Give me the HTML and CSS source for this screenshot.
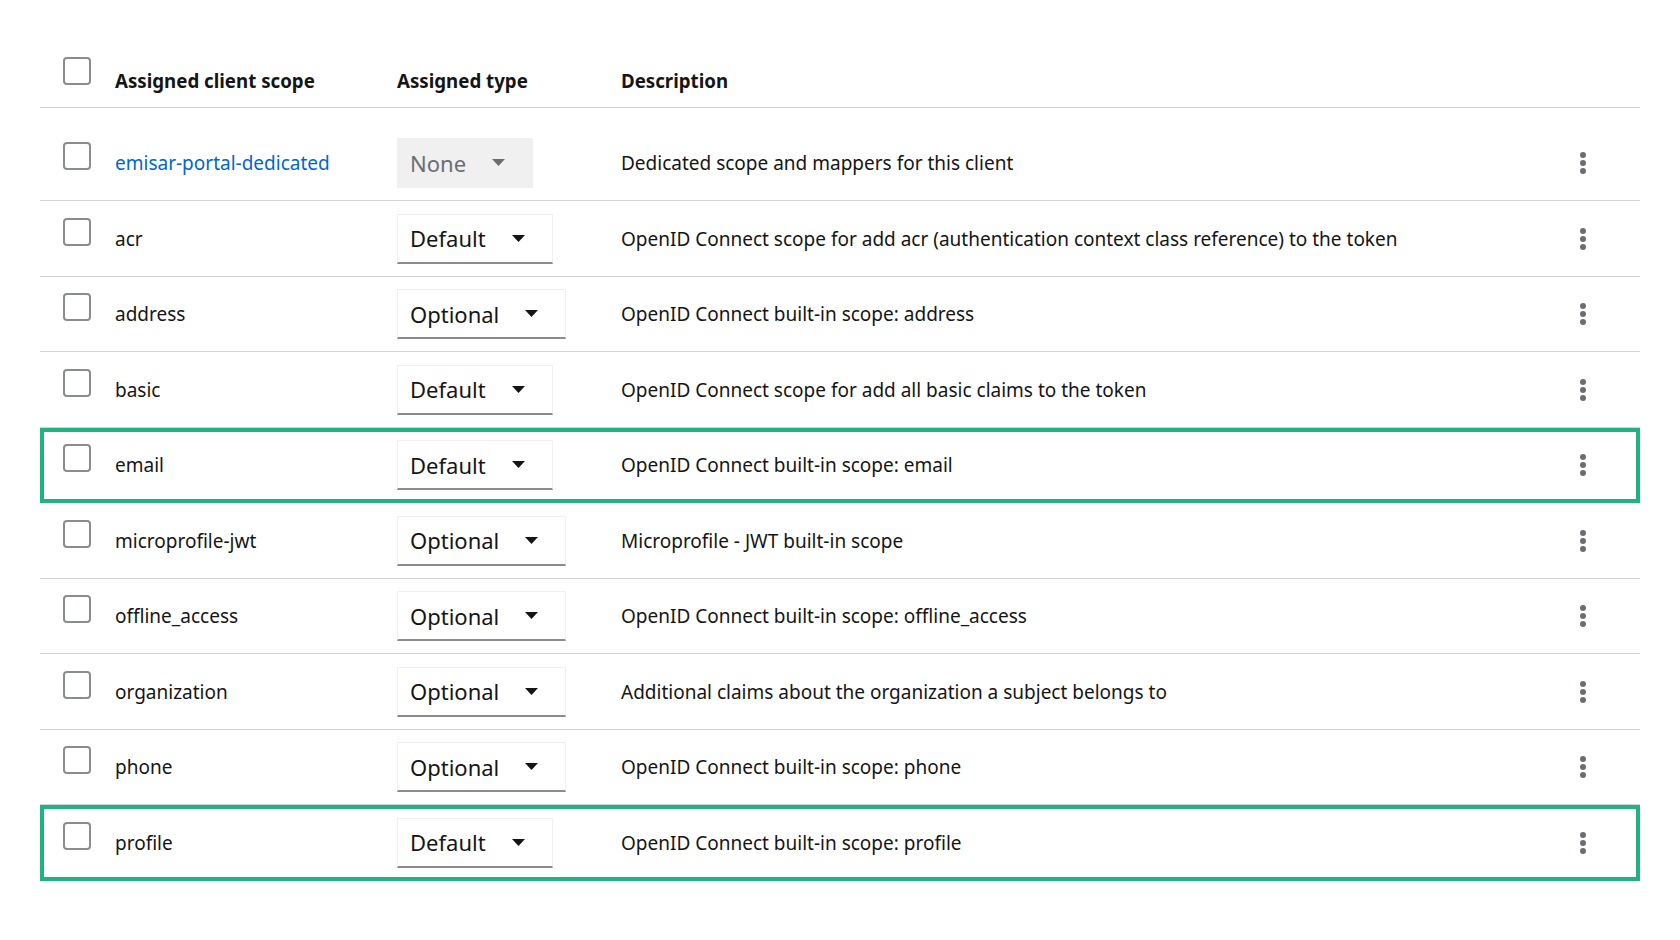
FILE: index.html
```html
<!DOCTYPE html>
<html lang="en">
<head>
    <meta charset="UTF-8">
    <meta name="viewport" content="width=device-width, initial-scale=1.0">
    <title>Client scopes</title>
    <link rel="stylesheet" href="styles.css">
</head>
<body>

    <div class="scopes">
        <div class="row head">
            <div class="cell check"><span class="checkbox"></span></div>
            <div class="cell">Assigned client scope</div>
            <div class="cell">Assigned type</div>
            <div class="cell">Description</div>
            <div class="cell"></div>
        </div>

        <div class="row first">
            <div class="cell check"><span class="checkbox"></span></div>
            <div class="cell"><a class="link" href="#">emisar-portal-dedicated</a></div>
            <div class="cell"><span class="select disabled">None <svg class="caret" viewBox="0 0 13 7"><path d="M0 0h13L6.5 7z"/></svg></span></div>
            <div class="cell desc">Dedicated scope and mappers for this client</div>
            <div class="cell kebab"><svg viewBox="0 0 6 22"><circle cx="3" cy="3" r="3"/><circle cx="3" cy="11" r="3"/><circle cx="3" cy="19" r="3"/></svg></div>
        </div>

        <div class="row">
            <div class="cell check"><span class="checkbox"></span></div>
            <div class="cell">acr</div>
            <div class="cell"><span class="select">Default <svg class="caret" viewBox="0 0 13 7"><path d="M0 0h13L6.5 7z"/></svg></span></div>
            <div class="cell desc">OpenID Connect scope for add acr (authentication context class reference) to the token</div>
            <div class="cell kebab"><svg viewBox="0 0 6 22"><circle cx="3" cy="3" r="3"/><circle cx="3" cy="11" r="3"/><circle cx="3" cy="19" r="3"/></svg></div>
        </div>

        <div class="row">
            <div class="cell check"><span class="checkbox"></span></div>
            <div class="cell">address</div>
            <div class="cell"><span class="select">Optional <svg class="caret" viewBox="0 0 13 7"><path d="M0 0h13L6.5 7z"/></svg></span></div>
            <div class="cell desc">OpenID Connect built-in scope: address</div>
            <div class="cell kebab"><svg viewBox="0 0 6 22"><circle cx="3" cy="3" r="3"/><circle cx="3" cy="11" r="3"/><circle cx="3" cy="19" r="3"/></svg></div>
        </div>

        <div class="row">
            <div class="cell check"><span class="checkbox"></span></div>
            <div class="cell">basic</div>
            <div class="cell"><span class="select">Default <svg class="caret" viewBox="0 0 13 7"><path d="M0 0h13L6.5 7z"/></svg></span></div>
            <div class="cell desc">OpenID Connect scope for add all basic claims to the token</div>
            <div class="cell kebab"><svg viewBox="0 0 6 22"><circle cx="3" cy="3" r="3"/><circle cx="3" cy="11" r="3"/><circle cx="3" cy="19" r="3"/></svg></div>
        </div>

        <div class="row marked">
            <div class="cell check"><span class="checkbox"></span></div>
            <div class="cell">email</div>
            <div class="cell"><span class="select">Default <svg class="caret" viewBox="0 0 13 7"><path d="M0 0h13L6.5 7z"/></svg></span></div>
            <div class="cell desc">OpenID Connect built-in scope: email</div>
            <div class="cell kebab"><svg viewBox="0 0 6 22"><circle cx="3" cy="3" r="3"/><circle cx="3" cy="11" r="3"/><circle cx="3" cy="19" r="3"/></svg></div>
        </div>

        <div class="row">
            <div class="cell check"><span class="checkbox"></span></div>
            <div class="cell">microprofile-jwt</div>
            <div class="cell"><span class="select">Optional <svg class="caret" viewBox="0 0 13 7"><path d="M0 0h13L6.5 7z"/></svg></span></div>
            <div class="cell desc">Microprofile - JWT built-in scope</div>
            <div class="cell kebab"><svg viewBox="0 0 6 22"><circle cx="3" cy="3" r="3"/><circle cx="3" cy="11" r="3"/><circle cx="3" cy="19" r="3"/></svg></div>
        </div>

        <div class="row">
            <div class="cell check"><span class="checkbox"></span></div>
            <div class="cell">offline_access</div>
            <div class="cell"><span class="select">Optional <svg class="caret" viewBox="0 0 13 7"><path d="M0 0h13L6.5 7z"/></svg></span></div>
            <div class="cell desc">OpenID Connect built-in scope: offline_access</div>
            <div class="cell kebab"><svg viewBox="0 0 6 22"><circle cx="3" cy="3" r="3"/><circle cx="3" cy="11" r="3"/><circle cx="3" cy="19" r="3"/></svg></div>
        </div>

        <div class="row">
            <div class="cell check"><span class="checkbox"></span></div>
            <div class="cell">organization</div>
            <div class="cell"><span class="select">Optional <svg class="caret" viewBox="0 0 13 7"><path d="M0 0h13L6.5 7z"/></svg></span></div>
            <div class="cell desc">Additional claims about the organization a subject belongs to</div>
            <div class="cell kebab"><svg viewBox="0 0 6 22"><circle cx="3" cy="3" r="3"/><circle cx="3" cy="11" r="3"/><circle cx="3" cy="19" r="3"/></svg></div>
        </div>

        <div class="row">
            <div class="cell check"><span class="checkbox"></span></div>
            <div class="cell">phone</div>
            <div class="cell"><span class="select">Optional <svg class="caret" viewBox="0 0 13 7"><path d="M0 0h13L6.5 7z"/></svg></span></div>
            <div class="cell desc">OpenID Connect built-in scope: phone</div>
            <div class="cell kebab"><svg viewBox="0 0 6 22"><circle cx="3" cy="3" r="3"/><circle cx="3" cy="11" r="3"/><circle cx="3" cy="19" r="3"/></svg></div>
        </div>

        <div class="row marked">
            <div class="cell check"><span class="checkbox"></span></div>
            <div class="cell">profile</div>
            <div class="cell"><span class="select">Default <svg class="caret" viewBox="0 0 13 7"><path d="M0 0h13L6.5 7z"/></svg></span></div>
            <div class="cell desc">OpenID Connect built-in scope: profile</div>
            <div class="cell kebab"><svg viewBox="0 0 6 22"><circle cx="3" cy="3" r="3"/><circle cx="3" cy="11" r="3"/><circle cx="3" cy="19" r="3"/></svg></div>
        </div>
    </div>

</body>
</html>
```

FILE: styles.css
```css
body {
    font-family: "Noto Sans", Arial, sans-serif;
    background-color: #fff;
    color: #151515;
    margin: 0;
}

.scopes {
    padding: 0 40px;
}

.row {
    display: grid;
    grid-template-columns: 75px 282px 224px 1fr 85px;
    align-items: center;
    padding: 12.5px 0 12px;
    border-bottom: 1px solid #d2d2d2;
    font-size: 19px;
}

.row.head {
    align-items: start;
    box-sizing: border-box;
    height: 108px;
    padding: 57px 0 0;
    font-weight: 700;
    font-size: 18.7px;
}

.row.head .cell {
    padding-top: 11px;
}

.row.head .cell.check {
    padding-top: 0;
}

.row.first {
    padding-top: 30px;
}

.row.marked {
    outline: 4px solid #1fb47f;
    outline-offset: -4px;
}

.cell.check {
    padding-left: 23px;
    align-self: start;
    padding-top: 4px;
}

.checkbox {
    display: block;
    width: 28px;
    height: 28px;
    box-sizing: border-box;
    border: 2px solid #8a8d90;
    border-radius: 4px;
    background-color: #fff;
}

.link {
    color: #0066cc;
    text-decoration: none;
}

.select {
    display: inline-flex;
    align-items: center;
    gap: 26px;
    height: 50px;
    box-sizing: border-box;
    padding: 0 27px 0 12px;
    border: 1px solid #f0f0f0;
    border-bottom: 2px solid #8a8d90;
    font-size: 22px;
    background-color: #fff;
}

.select.disabled {
    background-color: #f0f0f0;
    border-color: #f0f0f0;
    color: #6a6e73;
}

.caret {
    width: 13px;
    height: 7px;
    fill: #151515;
}

.select.disabled .caret {
    fill: #6a6e73;
}

.kebab {
    padding-left: 25px;
    display: flex;
}

.kebab svg {
    width: 6px;
    height: 22px;
    fill: #6a6e73;
}
```
